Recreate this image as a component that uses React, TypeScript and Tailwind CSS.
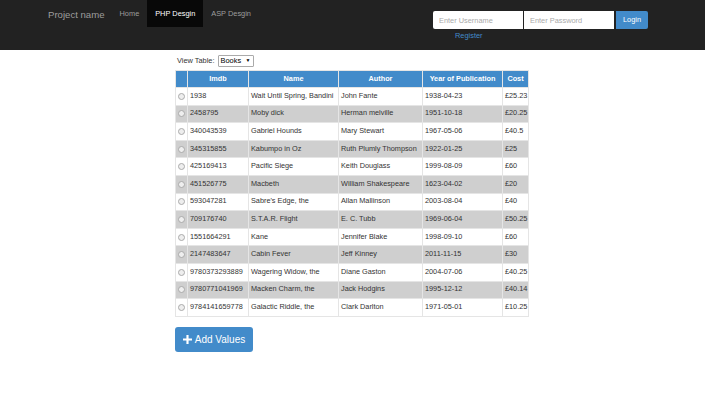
import React from "react";

const books = [
  ["1938", "Wait Until Spring, Bandini", "John Fante", "1938-04-23", "£25.23"],
  ["2458795", "Moby dick", "Herman melville", "1951-10-18", "£20.25"],
  ["340043539", "Gabriel Hounds", "Mary Stewart", "1967-05-06", "£40.5"],
  ["345315855", "Kabumpo in Oz", "Ruth Plumly Thompson", "1922-01-25", "£25"],
  ["425169413", "Pacific Siege", "Keith Douglass", "1999-08-09", "£60"],
  ["451526775", "Macbeth", "William Shakespeare", "1623-04-02", "£20"],
  ["593047281", "Sabre's Edge, the", "Allan Mallinson", "2003-08-04", "£40"],
  ["709176740", "S.T.A.R. Flight", "E. C. Tubb", "1969-06-04", "£50.25"],
  ["1551664291", "Kane", "Jennifer Blake", "1998-09-10", "£60"],
  ["2147483647", "Cabin Fever", "Jeff Kinney", "2011-11-15", "£30"],
  ["9780373293889", "Wagering Widow, the", "Diane Gaston", "2004-07-06", "£40.25"],
  ["9780771041969", "Macken Charm, the", "Jack Hodgins", "1995-12-12", "£40.14"],
  ["9784141659778", "Galactic Riddle, the", "Clark Darlton", "1971-05-01", "£10.25"],
];

export default function App() {
  return (
    <div className="min-h-[400px] bg-white font-['Liberation_Sans',Arial,sans-serif] text-[#333]">
      {/* navbar */}
      <div className="h-[50px] bg-[#222] flex items-start pl-[48px] pr-[57px]">
        <div className="text-[9.6px] text-[#9d9d9d] pt-[8px] pr-[15px]">Project name</div>
        <div className="flex text-[7.4px] h-[27px]">
          <div className="flex items-center text-[#9d9d9d]">Home</div>
          <div className="ml-[8px] w-[56px] flex items-center justify-center bg-[#080808] text-white">PHP Desgin</div>
          <div className="px-[8px] flex items-center text-[#9d9d9d]">ASP Desgin</div>
        </div>
        <div className="ml-auto pt-[11px] flex flex-col">
          <div className="flex gap-[1px]">
            <input
              className="w-[90px] h-[18px] bg-white rounded-l-[2px] px-[6px] text-[7.4px] outline-none placeholder:text-[#aaa]"
              placeholder="Enter Username"
            />
            <input
              className="w-[90px] h-[18px] bg-white px-[6px] text-[7.4px] outline-none placeholder:text-[#aaa]"
              placeholder="Enter Password"
            />
            <button className="ml-[1px] w-[32px] h-[18px] bg-[#428bca] text-white text-[7.4px] rounded-r-[2px]">
              Login
            </button>
          </div>
          <div className="pl-[22px] pt-[1px] text-[7.4px] text-[#428bca]">Register</div>
        </div>
      </div>

      {/* content */}
      <div className="pl-[175px] pt-[3px]">
        <div className="flex items-center h-[15px] text-[7.4px] pl-[2px]">
          <span>View Table:</span>
          <div className="ml-[3px] h-[12px] w-[36px] border border-[#aaa] rounded-[1px] flex items-center justify-between px-[2px] text-black">
            <span>Books</span>
            <span className="text-[5px]">▼</span>
          </div>
        </div>

        <table className="mt-[2px] border-collapse text-[7.3px] table-fixed w-[353px]">
          <colgroup>
            <col className="w-[12px]" />
            <col className="w-[61px]" />
            <col className="w-[90px]" />
            <col className="w-[84px]" />
            <col className="w-[80px]" />
            <col className="w-[26px]" />
          </colgroup>
          <thead>
            <tr className="h-[17px] bg-[#428bca] text-white font-bold">
              <th className="border border-[#e5e5e5]"></th>
              <th className="border border-[#e5e5e5] text-center">Imdb</th>
              <th className="border border-[#e5e5e5] text-center">Name</th>
              <th className="border border-[#e5e5e5] text-center">Author</th>
              <th className="border border-[#e5e5e5] text-center whitespace-nowrap">Year of Publication</th>
              <th className="border border-[#e5e5e5] text-center">Cost</th>
            </tr>
          </thead>
          <tbody>
            {books.map((b, i) => (
              <tr key={b[0]} className={i % 2 === 1 ? "h-[17.6px] bg-[#cfcfcf]" : "h-[17.6px] bg-white"}>
                <td className="border border-[#e5e5e5] px-[2px]">
                  <div className="w-[7px] h-[7px] rounded-full border border-[#aaa] bg-[#eee]" />
                </td>
                {b.map((c, j) => (
                  <td key={j} className="border border-[#e5e5e5] px-[2px] whitespace-nowrap overflow-hidden text-[#333]">
                    {c}
                  </td>
                ))}
              </tr>
            ))}
          </tbody>
        </table>

        <button className="mt-[10px] w-[78px] h-[25px] bg-[#428bca] rounded-[3px] text-white text-[10px] flex items-center justify-center gap-[3px]">
          <svg width="9" height="9" viewBox="0 0 10 10">
            <path d="M3.8 0h2.4v3.8H10v2.4H6.2V10H3.8V6.2H0V3.8h3.8z" fill="white" />
          </svg>
          Add Values
        </button>
      </div>
    </div>
  );
}
